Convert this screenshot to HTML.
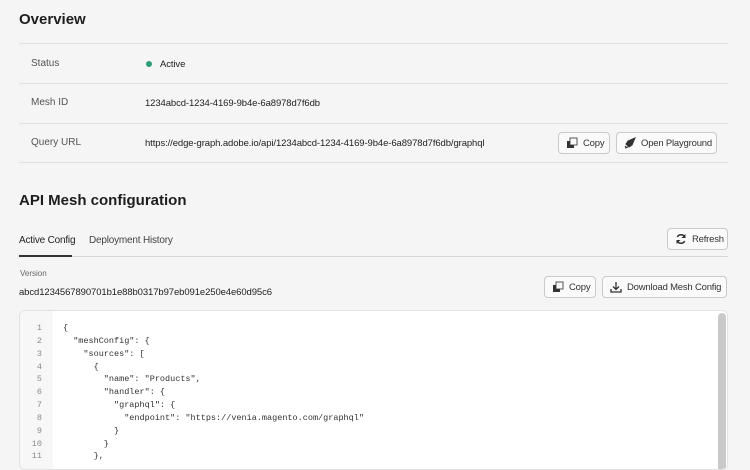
<!DOCTYPE html>
<html><head><meta charset="utf-8"><style>
*{box-sizing:border-box;margin:0;padding:0}
body{width:750px;height:462px;overflow:hidden;background:#f5f5f5;font-family:"Liberation Sans",sans-serif;color:#222;position:relative}
.a{position:absolute;white-space:nowrap}
h1{position:absolute;font-size:15px;font-weight:bold;color:#1e1e1e;white-space:nowrap}
.line{position:absolute;left:19px;width:709px;height:1px;background:#e1e1e1}
.lbl{font-size:10px;color:#555}
.val{font-size:9.5px;color:#222;letter-spacing:-0.1px}
.btn{position:absolute;height:22px;border:1px solid #cacaca;border-radius:4px;background:#fafafa;font-size:9.5px;letter-spacing:-0.2px;color:#333;display:flex;align-items:center;padding-left:7px;gap:5px;white-space:nowrap;overflow:hidden}
.btn svg{flex:none}
.code{position:absolute;left:19px;top:310px;width:709px;height:160px;background:#fff;border:1px solid #e2e2e2;border-radius:6px;overflow:hidden}
.gut{position:absolute;left:0;top:0;width:33px;height:100%;background:#f7f7f7}
.ln,.cd{position:absolute;top:11px;font-family:"Liberation Mono",monospace;font-size:8.5px;line-height:12.85px;white-space:pre}
.ln{right:685px;text-align:right;color:#8a8a8a}
.cd{left:43px;color:#333}
.sb{position:absolute;left:698px;top:2px;width:8px;height:170px;background:#c9c9c9;border-radius:4px}
</style></head><body>
<h1 style="left:19px;top:11px">Overview</h1>
<div class="line" style="top:43px"></div>
<div class="line" style="top:83px"></div>
<div class="line" style="top:123px"></div>
<div class="line" style="top:162px"></div>
<div class="a lbl" style="left:31px;top:58px">Status</div>
<div class="a" style="left:146px;top:61px;width:6px;height:6px;border-radius:50%;background:#2d9d78"></div>
<div class="a val" style="left:160px;top:59px">Active</div>
<div class="a lbl" style="left:31px;top:97px">Mesh ID</div>
<div class="a val" style="left:145px;top:98px">1234abcd-1234-4169-9b4e-6a8978d7f6db</div>
<div class="a lbl" style="left:31px;top:137px">Query URL</div>
<div class="a val" style="left:145px;top:138px">https://edge-graph.adobe.io/api/1234abcd-1234-4169-9b4e-6a8978d7f6db/graphql</div>
<div class="btn" style="left:558px;top:132px;width:52px"><svg width="12" height="12" viewBox="0 0 12 12"><rect x="4" y="1" width="7" height="7" fill="none" stroke="#555"/><path d="M1 4h3v4h4v3H1z" fill="#333"/></svg>Copy</div>
<div class="btn" style="left:616px;top:132px;width:101px"><svg width="12" height="12" viewBox="0 0 12 12"><path d="M11 1L4 4 2 7l3 3 3-2 3-7zM1 9l2 2M1 11l3-1" stroke="#333" fill="#333" stroke-width="1"/></svg>Open Playground</div>
<h1 style="left:19px;top:192px">API Mesh configuration</h1>
<div class="a" style="left:19px;top:235px;font-size:10px;color:#222;letter-spacing:-0.2px">Active Config</div>
<div class="a" style="left:89px;top:235px;font-size:10px;color:#444;letter-spacing:-0.2px">Deployment History</div>
<div class="line" style="top:256px;background:#d5d5d5"></div>
<div class="a" style="left:19px;top:255px;width:53px;height:2px;background:#333"></div>
<div class="btn" style="left:667px;top:228px;width:61px"><svg width="12" height="12" viewBox="0 0 12 12"><path d="M10 4.5A4.2 4.2 0 0 0 2.3 4M2 7.5A4.2 4.2 0 0 0 9.7 8" fill="none" stroke="#333" stroke-width="1.5"/><path d="M10.5 1v4h-4zM1.5 11V7h4z" fill="#333"/></svg>Refresh</div>
<div class="a" style="left:20px;top:269px;font-size:8px;color:#666">Version</div>
<div class="a val" style="left:19px;top:287px">abcd1234567890701b1e88b0317b97eb091e250e4e60d95c6</div>
<div class="btn" style="left:544px;top:276px;width:52px"><svg width="12" height="12" viewBox="0 0 12 12"><rect x="4" y="1" width="7" height="7" fill="none" stroke="#555"/><path d="M1 4h3v4h4v3H1z" fill="#333"/></svg>Copy</div>
<div class="btn" style="left:602px;top:276px;width:125px"><svg width="12" height="12" viewBox="0 0 12 12"><path d="M6 1v7M3 5.5l3 3 3-3M1 8v3h10V8" fill="none" stroke="#333" stroke-width="1.3"/></svg>Download Mesh Config</div>
<div class="code"><div class="gut"></div>
<div class="ln">1
2
3
4
5
6
7
8
9
10
11</div>
<div class="cd">{
  "meshConfig": {
    "sources": [
      {
        "name": "Products",
        "handler": {
          "graphql": {
            "endpoint": "https://venia.magento.com/graphql"
          }
        }
      },</div>
<div class="sb"></div></div>
</body></html>
